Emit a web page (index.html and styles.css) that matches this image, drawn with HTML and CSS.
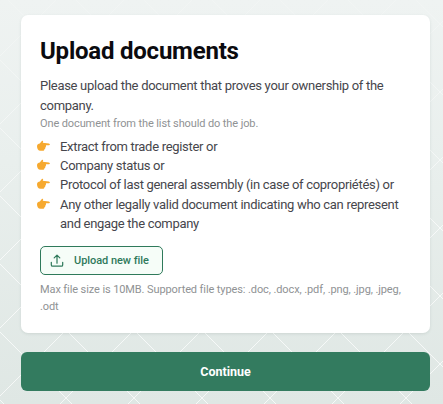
FILE: index.html
```html
<!DOCTYPE html>
<html lang="en">
<head>
<meta charset="utf-8">
<title>Upload documents</title>
<link rel="stylesheet" href="styles.css">
</head>
<body>
<svg class="pattern" width="443" height="404" viewBox="0 0 443 404" aria-hidden="true">
  <defs>
    <pattern id="lattice" x="-2" y="-10" width="68" height="68" patternUnits="userSpaceOnUse">
      <path fill="none" stroke="#fff" stroke-opacity=".7" stroke-width="1" d="M0 0 L68 68 M68 0 L0 68"/>
    </pattern>
  </defs>
  <rect width="443" height="404" fill="url(#lattice)"/>
</svg>
<main class="page">
  <section class="card">
    <h1 class="title">Upload documents</h1>
    <p class="lead">Please upload the document that proves your ownership of the company.</p>
    <p class="hint">One document from the list should do the job.</p>
    <ul class="list">
      <li class="item"><svg class="hand" viewBox="0 0 14 12"><path fill="#f6a92f" d="M0 6.2 C0 4.2 1.6 3.4 3 3.2 L5.2 .6 C5.8 0 6.8 .3 6.6 1.2 L6.2 2.6 L12.8 3.3 C14.3 3.6 14.2 5.2 12.8 5.2 L9.6 5.2 C10 6.4 9.6 7.2 9 7.6 C9.2 8.6 8.6 9.3 8 9.5 C8 10.6 7.2 11.2 6.2 11.2 L3.6 11.2 C1.4 11.2 0 9 0 6.2 Z"/></svg><span>Extract from trade register or</span></li>
      <li class="item"><svg class="hand" viewBox="0 0 14 12"><path fill="#f6a92f" d="M0 6.2 C0 4.2 1.6 3.4 3 3.2 L5.2 .6 C5.8 0 6.8 .3 6.6 1.2 L6.2 2.6 L12.8 3.3 C14.3 3.6 14.2 5.2 12.8 5.2 L9.6 5.2 C10 6.4 9.6 7.2 9 7.6 C9.2 8.6 8.6 9.3 8 9.5 C8 10.6 7.2 11.2 6.2 11.2 L3.6 11.2 C1.4 11.2 0 9 0 6.2 Z"/></svg><span>Company status or</span></li>
      <li class="item"><svg class="hand" viewBox="0 0 14 12"><path fill="#f6a92f" d="M0 6.2 C0 4.2 1.6 3.4 3 3.2 L5.2 .6 C5.8 0 6.8 .3 6.6 1.2 L6.2 2.6 L12.8 3.3 C14.3 3.6 14.2 5.2 12.8 5.2 L9.6 5.2 C10 6.4 9.6 7.2 9 7.6 C9.2 8.6 8.6 9.3 8 9.5 C8 10.6 7.2 11.2 6.2 11.2 L3.6 11.2 C1.4 11.2 0 9 0 6.2 Z"/></svg><span>Protocol of last general assembly (in case of copropriétés) or</span></li>
      <li class="item"><svg class="hand" viewBox="0 0 14 12"><path fill="#f6a92f" d="M0 6.2 C0 4.2 1.6 3.4 3 3.2 L5.2 .6 C5.8 0 6.8 .3 6.6 1.2 L6.2 2.6 L12.8 3.3 C14.3 3.6 14.2 5.2 12.8 5.2 L9.6 5.2 C10 6.4 9.6 7.2 9 7.6 C9.2 8.6 8.6 9.3 8 9.5 C8 10.6 7.2 11.2 6.2 11.2 L3.6 11.2 C1.4 11.2 0 9 0 6.2 Z"/></svg><span>Any other legally valid document indicating who can represent and engage the company</span></li>
    </ul>
    <button class="upload" type="button">
      <svg class="upload-icon" viewBox="0 0 16 16"><path fill="none" stroke="#2f7a5b" stroke-width="1.4" stroke-linecap="round" stroke-linejoin="round" d="M8 11 V2 M4.8 5 L8 1.8 L11.2 5 M1.5 10 V13 C1.5 14 2 14.5 3 14.5 H13 C14 14.5 14.5 14 14.5 13 V10"/></svg>
      <span>Upload new file</span>
    </button>
    <p class="limits">Max file size is 10MB. Supported file types: .doc, .docx, .pdf, .png, .jpg, .jpeg, .odt</p>
  </section>
  <button class="continue" type="button">Continue</button>
</main>
</body>
</html>
```
FILE: styles.css
```css
* { box-sizing: border-box; }
html, body { margin: 0; height: 100%; }
body {
  position: relative;
  width: 443px;
  height: 404px;
  overflow: hidden;
  font-family: Roboto, "Liberation Sans", sans-serif;
  background: linear-gradient(180deg, #eff3f2 0%, #e9efed 40%, #dfe7e4 100%);
}
.pattern {
  position: absolute;
  left: 0;
  top: 0;
  -webkit-mask-image: linear-gradient(180deg, rgba(0, 0, 0, .25) 0%, #000 60%);
  mask-image: linear-gradient(180deg, rgba(0, 0, 0, .25) 0%, #000 60%);
}
.page {
  position: relative;
  display: flex;
  flex-direction: column;
  gap: 19px;
  padding: 15px 13px 0 21px;
}
.card {
  height: 318px;
  padding: 21px 19px 0;
  background: #fff;
  border-radius: 7px;
  box-shadow: 0 1px 3px rgba(60, 80, 70, .12);
}
.title {
  margin: 0 0 10px;
  font-size: 24px;
  line-height: 30px;
  font-weight: 700;
  letter-spacing: -.22px;
  color: #0b0b0f;
}
.lead {
  margin: 0;
  font-size: 13px;
  line-height: 20px;
  letter-spacing: -.29px;
  color: #46464c;
}
.hint {
  margin: 0 0 6px;
  font-size: 11px;
  line-height: 15px;
  letter-spacing: -.11px;
  color: #8f9294;
}
.list { margin: 0 0 13px; padding: 0; list-style: none; }
.item {
  display: flex;
  align-items: flex-start;
  gap: 7px;
  font-size: 13px;
  line-height: 19.2px;
  letter-spacing: -.3px;
  color: #46464c;
}
.hand { flex: none; width: 13px; height: 12px; margin-top: 3px; margin-left: -3px; margin-right: 3px; }
.upload {
  display: flex;
  align-items: center;
  gap: 10px;
  width: 123px;
  height: 29px;
  padding: 0 0 0 9px;
  border: 1px solid #2f7a5b;
  border-radius: 5px;
  background: #f6fdf8;
  font: 500 11px Roboto, "Liberation Sans", sans-serif;
  letter-spacing: -.05px;
  color: #2f7a5b;
}
.upload-icon { width: 14px; height: 15px; flex: none; }
.limits {
  margin: 6px 0 0;
  font-size: 11px;
  line-height: 17px;
  letter-spacing: -.1px;
  color: #8f9294;
}
.continue {
  height: 39px;
  border: 0;
  border-radius: 6px;
  background: #337b5f;
  color: #fff;
  font: 700 12.5px Roboto, "Liberation Sans", sans-serif;
}
```
